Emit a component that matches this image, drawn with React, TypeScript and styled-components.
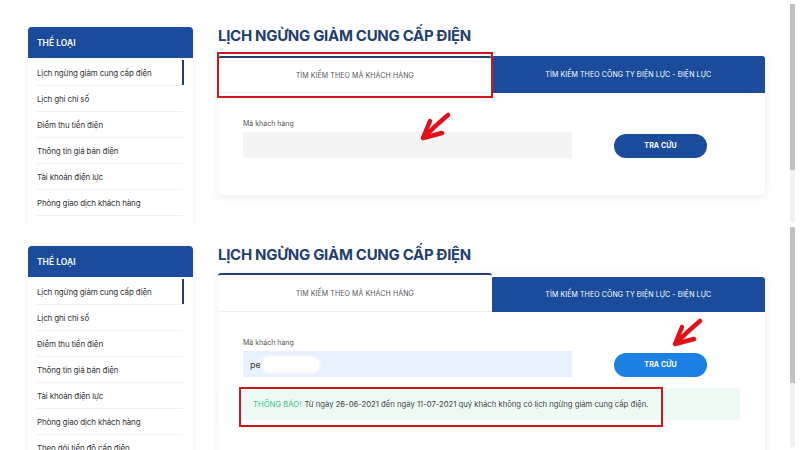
import styled, { createGlobalStyle } from "styled-components";

const GlobalStyle = createGlobalStyle`
    html, body { margin: 0; padding: 0; background: #fff; }
    body { font-family: Inter, "Noto Sans", sans-serif; color: #333; }
    * { box-sizing: border-box; }
`;

const Page = styled.div`
    width: 800px;
    height: 450px;
    overflow: hidden;
    display: flex;
    flex-direction: column;
`;

const Shot = styled.div<{ $h: number; $top: number }>`
    height: ${p => p.$h}px;
    overflow: hidden;
    display: flex;
    align-items: flex-start;
    padding: ${p => p.$top}px 0 0 28px;
    position: relative;
`;

const Sidebar = styled.div`
    width: 165px;
    flex-shrink: 0;
    background: #fff;
    border-radius: 4px 4px 0 0;
    box-shadow: 0 1px 6px rgba(0,0,0,.07);
    padding-bottom: 10px;
`;

const SideHead = styled.div`
    height: 31px;
    background: #1b4c9c;
    border-radius: 4px 4px 0 0;
    color: #fff;
    font-size: 8.5px;
    font-weight: 600;
    display: flex;
    align-items: center;
    padding-left: 9px;
`;

const SideList = styled.ul`
    list-style: none;
    margin: 0;
    padding: 2px 10px 0 9px;
`;

const SideItem = styled.li<{ $active?: boolean }>`
    height: 26px;
    display: flex;
    align-items: center;
    font-size: 8px;
    letter-spacing: -0.15px;
    color: #333;
    border-bottom: 1px solid #efefef;
    position: relative;

    &::after {
        content: "";
        display: ${p => (p.$active ? "block" : "none")};
        position: absolute;
        right: -1px;
        top: 0;
        width: 2px;
        height: 25px;
        background: #223f6e;
    }
`;

const Main = styled.div`
    width: 547px;
    margin-left: 25px;
    flex-shrink: 0;
`;

const Title = styled.h1`
    margin: 0;
    font-size: 15px;
    line-height: 18px;
    font-weight: 700;
    letter-spacing: -0.3px;
    color: #223f6e;
`;

const Card = styled.div<{ $gap: number }>`
    margin-top: ${p => p.$gap}px;
    background: #fff;
    box-shadow: 0 2px 8px rgba(0,0,0,.08);
`;

const TabRow = styled.div`
    display: flex;
    align-items: flex-end;
    position: relative;
`;

const Tab = styled.div<{ $active?: boolean; $h: number }>`
    flex: 1;
    height: ${p => p.$h}px;
    display: flex;
    align-items: center;
    justify-content: center;
    font-size: 7px;
    letter-spacing: 0.1px;
    text-transform: uppercase;
    background: ${p => (p.$active ? "#fff" : "#1b4c9c")};
    color: ${p => (p.$active ? "#555" : "#fff")};
    border-top: ${p => (p.$active ? "2px solid #223f6e" : "none")};
    border-bottom: ${p => (p.$active ? "1px solid #eee" : "none")};
    border-radius: ${p => (p.$active ? "3px 3px 0 0" : "0 3px 0 0")};
`;

const RedBox = styled.div<{ $l: number; $t: number; $w: number; $h: number }>`
    position: absolute;
    left: ${p => p.$l}px;
    top: ${p => p.$t}px;
    width: ${p => p.$w}px;
    height: ${p => p.$h}px;
    border: 2px solid #d0151c;
    pointer-events: none;
`;

const Body = styled.div<{ $bottom: number }>`
    padding: 26px 25px ${p => p.$bottom}px;
`;

const Label = styled.div`
    font-size: 7px;
    line-height: 10px;
    color: #555;
    margin-bottom: 3px;
`;

const FormRow = styled.div`
    display: flex;
    align-items: center;
`;

const Field = styled.div<{ $filled?: boolean }>`
    width: 329px;
    height: 26px;
    background: ${p => (p.$filled ? "#e8f0fe" : "#f4f4f4")};
    display: flex;
    align-items: center;
    padding-left: 7px;
    font-size: 9px;
    color: #333;
    position: relative;
`;

const Redacted = styled.span`
    display: inline-block;
    width: 57px;
    height: 15px;
    margin-left: 1px;
    border-radius: 8px;
    background: #fff;
    box-shadow: 0 0 3px 1px #fff;
`;

const ButtonWrap = styled.div`
    margin-left: 42px;
    position: relative;
`;

const Button = styled.button<{ $focus?: boolean }>`
    width: 93px;
    height: 24px;
    border: none;
    border-radius: 12px;
    background: ${p => (p.$focus ? "#1b80e2" : "#1b4c9c")};
    color: #fff;
    font-family: inherit;
    font-size: 7px;
    font-weight: 700;
    letter-spacing: 0.1px;
`;

const Alert = styled.div`
    margin-top: 11px;
    height: 32px;
    background: #edf9f3;
    display: flex;
    align-items: center;
    padding-left: 10px;
    font-size: 7.7px;
    color: #444;
    position: relative;
`;

const AlertTag = styled.span`
    color: #3cc283;
    margin-right: 3px;
`;

const Arrow = styled.svg<{ $l: number; $t: number }>`
    position: absolute;
    left: ${p => p.$l}px;
    top: ${p => p.$t}px;
    width: 34px;
    height: 34px;
    overflow: visible;
`;

const Scrollbar = styled.div<{ $thumb: number; $top: number; $h: number }>`
    position: absolute;
    left: 790px;
    top: ${p => p.$top}px;
    width: 5px;
    height: ${p => p.$h}px;
    background: #f1f1f1;

    &::before {
        content: "";
        display: block;
        height: ${p => p.$thumb}px;
        background: #c1c1c1;
    }
`;

const menu = [
    "Lịch ngừng giảm cung cấp điện",
    "Lịch ghi chỉ số",
    "Điểm thu tiền điện",
    "Thông tin giá bán điện",
    "Tài khoản điện lực",
    "Phòng giao dịch khách hàng",
    "Theo dõi tiến độ cấp điện",
];

function RedArrow({ l, t }: { l: number; t: number }) {
    return (
        <Arrow $l={l} $t={t} viewBox="0 0 34 34">
            <g stroke="#e3101a" strokeWidth="4.5" strokeLinecap="round" strokeLinejoin="round" fill="none">
                <path d="M30 5 Q18 15 6 27" />
                <path d="M12 11 L5 28 L24 23" />
            </g>
        </Arrow>
    );
}

function Menu({ count }: { count: number }) {
    return (
        <Sidebar>
            <SideHead>THỂ LOẠI</SideHead>
            <SideList>
                {menu.slice(0, count).map((m, i) => (
                    <SideItem key={m} $active={i === 0}>{m}</SideItem>
                ))}
            </SideList>
        </Sidebar>
    );
}

function Tabs({ raised, boxed }: { raised?: boolean; boxed?: boolean }) {
    const h = raised ? 35 : 37;
    return (
        <TabRow>
            <Tab $active $h={raised ? h + 4 : h}>Tìm kiếm theo mã khách hàng</Tab>
            <Tab $h={h}>Tìm kiếm theo công ty điện lực - điện lực</Tab>
            {boxed && <RedBox $l={-1} $t={-4} $w={276} $h={46} />}
        </TabRow>
    );
}

export default function App() {
    return (
        <Page>
            <GlobalStyle />
            <Shot $h={224} $top={27}>
                <Menu count={6} />
                <Main>
                    <Title>LỊCH NGỪNG GIẢM CUNG CẤP ĐIỆN</Title>
                    <Card $gap={11}>
                        <Tabs boxed />
                        <Body $bottom={37}>
                            <Label>Mã khách hàng</Label>
                            <FormRow>
                                <Field>
                                    <RedArrow l={175} t={-22} />
                                </Field>
                                <ButtonWrap>
                                    <Button>TRA CỨU</Button>
                                </ButtonWrap>
                            </FormRow>
                        </Body>
                    </Card>
                </Main>
                <Scrollbar $top={4} $h={218} $thumb={166} />
            </Shot>
            <Shot $h={226} $top={22}>
                <Menu count={7} />
                <Main>
                    <Title>LỊCH NGỪNG GIẢM CUNG CẤP ĐIỆN</Title>
                    <Card $gap={9}>
                        <Tabs raised />
                        <Body $bottom={40}>
                            <Label>Mã khách hàng</Label>
                            <FormRow>
                                <Field $filled>
                                    pe<Redacted />
                                </Field>
                                <ButtonWrap>
                                    <Button $focus>TRA CỨU</Button>
                                    <RedArrow l={56} t={-35} />
                                </ButtonWrap>
                            </FormRow>
                            <Alert>
                                <AlertTag>THÔNG BÁO!</AlertTag>
                                Từ ngày 26-06-2021 đến ngày 11-07-2021 quý khách không có lịch ngừng giảm cung cấp điện.
                                <RedBox $l={-4} $t={-1} $w={424} $h={40} />
                            </Alert>
                        </Body>
                    </Card>
                </Main>
                <Scrollbar $top={3} $h={220} $thumb={156} />
            </Shot>
        </Page>
    );
}
